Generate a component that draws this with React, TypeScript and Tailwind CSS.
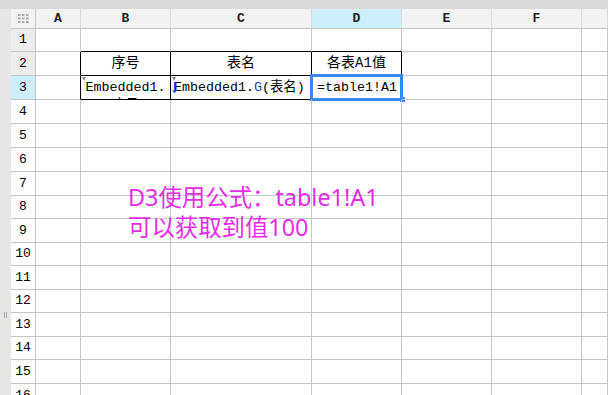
import React from "react";

const COLS = ["A", "B", "C", "D", "E", "F", "G"];
const ROW_H = [23, 24, 24, 24, 24, 24, 24, 23, 24, 23, 24, 23, 24, 23, 24, 24];

const mono = { fontFamily: '"Liberation Mono", "Noto Sans CJK SC", monospace' };

function Marker() {
  return (
    <svg className="absolute left-[1px] top-[1px]" width="5" height="5" viewBox="0 0 5 5">
      <path d="M0 0 L4 0 L2 4 Z" fill="#8a8a8a" />
    </svg>
  );
}

function CellContent({ r, c }: { r: number; c: string }) {
  if (r === 2) {
    const t = c === "B" ? "序号" : c === "C" ? "表名" : c === "D" ? "各表A1值" : "";
    if (!t) return null;
    return (
      <div className="flex h-full items-center justify-center text-[14px] text-black" style={mono}>
        {t}
      </div>
    );
  }
  if (r === 3 && c === "B") {
    return (
      <>
        <Marker />
        <div className="h-full overflow-hidden pt-[3px] text-center text-[13.33px] leading-[18px] text-black" style={mono}>
          Embedded1.
          <br />
          (序号)
        </div>
      </>
    );
  }
  if (r === 3 && c === "C") {
    return (
      <>
        <Marker />
        <svg className="absolute left-[1px] top-[5px]" width="5" height="13" viewBox="0 0 5 13">
          <path d="M2.5 1 L2.5 11" stroke="#2a55e8" strokeWidth="1.2" />
          <path d="M0.5 9 L2.5 12 L4.5 9" stroke="#2a55e8" strokeWidth="1" fill="none" />
        </svg>
        <div className="flex h-full items-center whitespace-nowrap pl-[3px] text-[13.33px] text-black" style={mono}>
          Embedded1.<span className="text-[#1a3fd0]">G</span>(表名)
        </div>
      </>
    );
  }
  if (r === 3 && c === "D") {
    return (
      <>
        <div className="flex h-full items-center whitespace-nowrap pl-[5px] text-[13.33px] text-black" style={mono}>
          =table1!A1
        </div>
        <div className="pointer-events-none absolute -left-[2px] -top-[2px] -right-[2px] -bottom-[2px] border-[3px] border-[#3a87ec]" />
        <div className="absolute -right-[4px] -bottom-[3px] h-[5px] w-[5px] bg-[#3a87ec]" />
      </>
    );
  }
  return null;
}

export default function App() {
  const rows = ROW_H.map((_, i) => i + 1);
  const inTable = (r: number, c: string) => (r === 2 || r === 3) && (c === "B" || c === "C" || c === "D");
  return (
    <div className="flex h-[395px] w-[608px] flex-col overflow-hidden bg-white">
      <div className="h-[9px] shrink-0 bg-[#dadada]" />
      <div className="flex min-h-0 flex-1">
        <div className="relative w-[11px] shrink-0 bg-[#e6e6e6]">
          <div className="absolute left-[4px] top-[303px] flex gap-[1px]">
            <div className="h-[6px] w-[1px] bg-[#a8a8a8]" />
            <div className="h-[6px] w-[1px] bg-[#a8a8a8]" />
          </div>
        </div>
        <div className="grid min-w-0 flex-1 grid-cols-[25px_45px_90px_141px_90px_90px_90px_1fr] grid-rows-[20px_23px_24px_24px_24px_24px_24px_24px_23px_24px_23px_24px_23px_24px_23px_24px_24px] overflow-hidden">
          {/* corner */}
          <div className="flex items-center justify-center border-r border-b border-[#c9c9c9] bg-[#f3f3f3]">
            <svg width="11" height="9" viewBox="0 0 11 9">
              {[0, 4, 8].map((x) =>
                [0, 3.5, 7].map((y) => <rect key={`${x}-${y}`} x={x} y={y} width="2.5" height="2" fill="#a9a9a9" />)
              )}
            </svg>
          </div>
          {COLS.map((c) => (
            <div
              key={c}
              className={`flex items-center justify-center border-r border-b border-r-[#dcdcdc] border-b-[#c6c6c6] text-[13px] font-bold text-[#222] ${
                c === "D" ? "bg-[#cfeefb]" : "bg-[#f3f3f3]"
              }`}
              style={mono}
            >
              {c === "G" ? "" : c}
            </div>
          ))}
          {rows.map((r) => (
            <React.Fragment key={r}>
              <div
                className={`flex items-center justify-center border-r border-b border-[#c6c6c6] text-[13px] text-black ${
                  r === 3 ? "bg-[#cfeefb]" : r <= 2 ? "bg-[#ececec]" : "bg-white"
                }`}
                style={mono}
              >
                {r}
              </div>
              {COLS.map((c) => {
                const bottomBlack = (r === 1 || inTable(r, c)) && (c === "B" || c === "C" || c === "D") && r <= 3;
                const rightBlack = (r === 2 || r === 3) && (c === "A" || c === "B" || c === "C" || c === "D");
                return (
                  <div
                    key={c}
                    className={`relative border-r border-b ${bottomBlack ? "border-b-black" : "border-b-[#c6c6c6]"} ${
                      rightBlack ? "border-r-black" : "border-r-[#c6c6c6]"
                    }`}
                  >
                    <CellContent r={r} c={c} />
                  </div>
                );
              })}
            </React.Fragment>
          ))}
        </div>
      </div>
      <div
        className="absolute left-[128px] top-[182px] text-[23.4px] leading-[30px] text-[#e62ce6]"
        style={{ fontFamily: '"Noto Sans", "Noto Sans CJK SC", sans-serif' }}
      >
        D3使用公式：table1!A1
        <br />
        可以获取到值100
      </div>
    </div>
  );
}
